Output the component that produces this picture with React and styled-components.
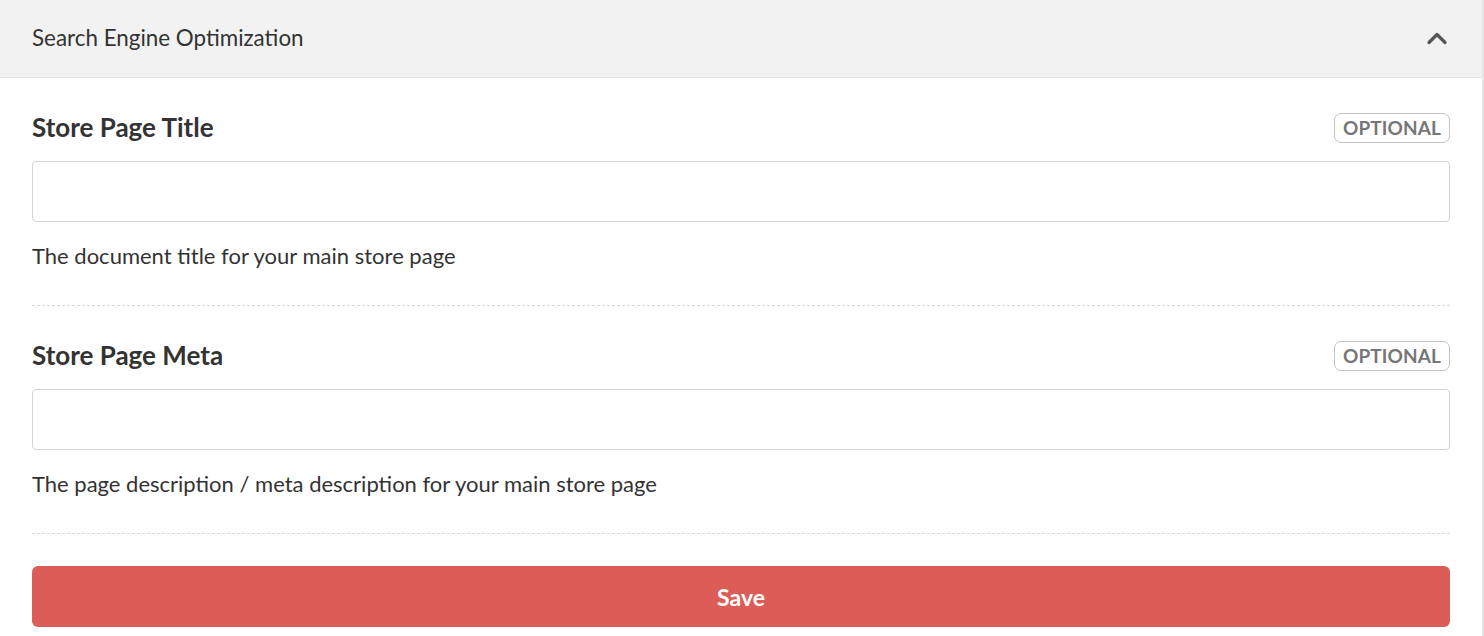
import React from 'react';
import styled, { createGlobalStyle } from 'styled-components';

const GlobalStyle = createGlobalStyle`
	* { box-sizing: border-box; }
	body {
		margin: 0;
		background: #ffffff;
		font-family: Lato, "Open Sans", sans-serif;
		color: #333333;
	}
`

const Panel = styled.div`
	width: 1484px;
	border-right: 2px solid #e6e6e6;
	background: #ffffff;
`

const Header = styled.div`
	height: 78px;
	display: flex;
	align-items: center;
	justify-content: space-between;
	padding: 0 34px 2px 32px;
	background: #f2f2f2;
	border-bottom: 1px solid #e2e2e2;
`

const HeaderTitle = styled.h2`
	margin: 0;
	font-size: 22.4px;
	font-weight: 400;
	color: #333333;
`

const Chevron = styled.svg`
	width: 22px;
	height: 16px;
	stroke: #555555;
	fill: none;
	cursor: pointer;
`

const Body = styled.div`
	padding: 35px 32px 9px 32px;
`

const Field = styled.div`
	padding-bottom: 34px;
	margin-bottom: ${props => props.last ? '32px' : '35px'};
	border-bottom: 1px dashed #d6d6d6;
`

const LabelRow = styled.div`
	display: flex;
	align-items: center;
	justify-content: space-between;
	height: 30px;
`

const Label = styled.label`
	font-size: 26px;
	font-weight: 700;
	color: #333333;
	margin-top: -2px;
`

const Badge = styled.span`
	display: inline-flex;
	align-items: center;
	height: 30px;
	padding: 0 8px 1px 8px;
	border: 1px solid #c4c4c4;
	border-radius: 7px;
	font-size: 19px;
	font-weight: 700;
	color: #777777;
	letter-spacing: 0.1px;
`

const Input = styled.input`
	display: block;
	width: 100%;
	height: 61px;
	margin-top: 18px;
	padding: 0 14px;
	border: 1px solid #d4d4d4;
	border-radius: 4px;
	font-family: inherit;
	font-size: 20px;
	color: #333333;
	outline: none;
`

const Help = styled.p`
	margin: 19px 0 0 0;
	font-size: 22px;
	line-height: 30px;
	color: #333333;
`

const SaveButton = styled.button`
	display: block;
	width: 100%;
	height: 61px;
	border: none;
	border-radius: 6px;
	background: #dc5d57;
	color: #ffffff;
	font-family: inherit;
	font-size: 23px;
	font-weight: 700;
	cursor: pointer;
`

const fields = [
	{ label: 'Store Page Title', help: 'The document title for your main store page' },
	{ label: 'Store Page Meta', help: 'The page description / meta description for your main store page' }
];

export default function App(){
	return (
		<>
			<GlobalStyle/>
			<Panel>
				<Header>
					<HeaderTitle>Search Engine Optimization</HeaderTitle>
					<Chevron viewBox="0 0 22 16" role="img" aria-label="collapse">
						<path d="M3 12.5 L11 4.5 L19 12.5" strokeWidth="3.2" strokeLinecap="round" strokeLinejoin="round"/>
					</Chevron>
				</Header>
				<Body>
					{fields.map((f, i) =>
						<Field key={f.label} last={i === fields.length - 1}>
							<LabelRow>
								<Label>{f.label}</Label>
								<Badge>OPTIONAL</Badge>
							</LabelRow>
							<Input type="text"/>
							<Help>{f.help}</Help>
						</Field>
					)}
					<SaveButton>Save</SaveButton>
				</Body>
			</Panel>
		</>
	)
}
